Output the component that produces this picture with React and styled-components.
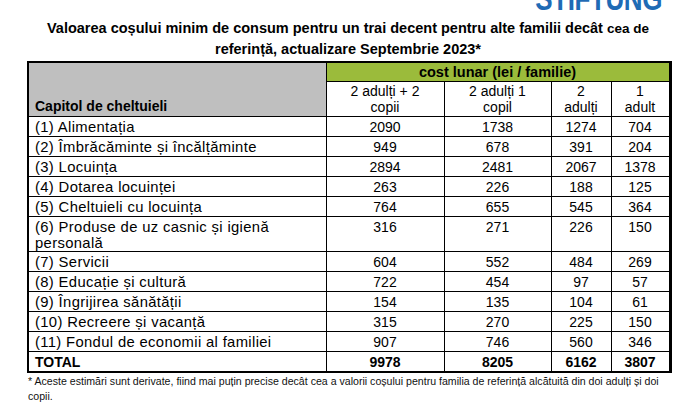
import React from "react";
import styled, { createGlobalStyle } from "styled-components";

const GlobalStyle = createGlobalStyle`
  html, body {
    margin: 0;
    padding: 0;
    background: #ffffff;
  }
  body {
    font-family: "Liberation Sans", Arial, sans-serif;
    color: #000;
  }
`;

const Page = styled.div`
  width: 679px;
  height: 408px;
  overflow: hidden;
`;

const LogoStrip = styled.div`
  height: 11px;
  overflow: hidden;
  display: flex;
  justify-content: flex-end;
  align-items: flex-end;
  padding-right: 17px;
`;

const Logo = styled.span`
  display: inline-block;
  font-weight: 700;
  font-size: 26px;
  line-height: 19px;
  letter-spacing: -0.4px;
  color: #1f6bb5;
  transform: scaleY(1.25);
  transform-origin: right bottom;
`;

const Title = styled.h1`
  margin: 7px 0 0 28px;
  width: 640px;
  text-align: center;
  font-size: 14.5px;
  line-height: 20px;
  font-weight: 700;
`;

const Smaller = styled.span`
  font-size: 13.5px;
`;

const Table = styled.table`
  margin: 2px 0 0 27px;
  width: 642px;
  table-layout: fixed;
  border-collapse: collapse;
  border: 2px solid #000;
  border-right-width: 3px;
  font-size: 14px;
`;

const Cell = styled.td`
  border: 1px solid #000;
  padding: ${(p) => (p.$label ? "2px 4px 0 6px" : "2px 2px 0")};
  height: ${(p) => (p.$tall ? "32px" : "17px")};
  line-height: 16px;
  vertical-align: top;
  text-align: ${(p) => (p.$label ? "left" : "center")};
  font-weight: ${(p) => (p.$bold ? 700 : 400)};
  font-size: ${(p) => (p.$label && !p.$bold ? "14.8px" : "14px")};
  letter-spacing: ${(p) => (p.$label && !p.$bold ? "0.35px" : "0")};
`;

const CornerHead = styled.th`
  background: #bfbfbf;
  border: 1px solid #000;
  text-align: left;
  vertical-align: bottom;
  padding: 0 6px 2px;
  font-weight: 700;
  font-size: 14px;
`;

const GroupHead = styled.th`
  background: #9bbb3b;
  border: 1px solid #000;
  height: 18px;
  padding: 0;
  font-weight: 700;
  font-size: 14.5px;
  line-height: 18px;
`;

const SubHead = styled.th`
  border: 1px solid #000;
  font-weight: 400;
  font-size: 14px;
  line-height: 16px;
  height: 33px;
  padding: 1px 2px 0;
  vertical-align: top;
`;

const Note = styled.p`
  margin: 1px 0 0 28px;
  width: 640px;
  font-size: 10.6px;
  line-height: 15px;
  color: #111;
`;

const rows = [
  ["(1) Alimentația", 2090, 1738, 1274, 704],
  ["(2) Îmbrăcăminte și încălțăminte", 949, 678, 391, 204],
  ["(3) Locuința", 2894, 2481, 2067, 1378],
  ["(4) Dotarea locuinței", 263, 226, 188, 125],
  ["(5) Cheltuieli cu locuința", 764, 655, 545, 364],
  ["(6) Produse de uz casnic și igienă personală", 316, 271, 226, 150, true],
  ["(7) Servicii", 604, 552, 484, 269],
  ["(8) Educație și cultură", 722, 454, 97, 57],
  ["(9) Îngrijirea sănătății", 154, 135, 104, 61],
  ["(10) Recreere și vacanță", 315, 270, 225, 150],
  ["(11) Fondul de economii al familiei", 907, 746, 560, 346],
];

const groups = [
  ["2 adulți + 2", "copii"],
  ["2 adulți 1", "copil"],
  ["2", "adulți"],
  ["1", "adult"],
];

export default function App() {
  return (
    <Page>
      <GlobalStyle />
      <LogoStrip>
        <Logo>STIFTUNG</Logo>
      </LogoStrip>
      <Title>
        Valoarea coșului minim de consum pentru un trai decent pentru alte familii decât <Smaller>cea de</Smaller>
        <br />
        referință, actualizare Septembrie 2023*
      </Title>
      <Table>
        <colgroup>
          <col style={{ width: 298 }} />
          <col style={{ width: 118 }} />
          <col style={{ width: 107 }} />
          <col style={{ width: 60 }} />
          <col style={{ width: 59 }} />
        </colgroup>
        <thead>
          <tr>
            <CornerHead rowSpan={2}>Capitol de cheltuieli</CornerHead>
            <GroupHead colSpan={4}>cost lunar (lei / familie)</GroupHead>
          </tr>
          <tr>
            {groups.map(([a, b]) => (
              <SubHead key={a + b}>
                {a}
                <br />
                {b}
              </SubHead>
            ))}
          </tr>
        </thead>
        <tbody>
          {rows.map(([label, a, b, c, d, tall]) => (
            <tr key={label}>
              <Cell $label $tall={tall}>{label}</Cell>
              <Cell>{a}</Cell>
              <Cell>{b}</Cell>
              <Cell>{c}</Cell>
              <Cell>{d}</Cell>
            </tr>
          ))}
          <tr>
            <Cell $label $bold>TOTAL</Cell>
            <Cell $bold>9978</Cell>
            <Cell $bold>8205</Cell>
            <Cell $bold>6162</Cell>
            <Cell $bold>3807</Cell>
          </tr>
        </tbody>
      </Table>
      <Note>
        * Aceste estimări sunt derivate, fiind mai puțin precise decât cea a valorii coșului pentru familia de referință alcătuită din doi adulți și doi copii.
      </Note>
    </Page>
  );
}
